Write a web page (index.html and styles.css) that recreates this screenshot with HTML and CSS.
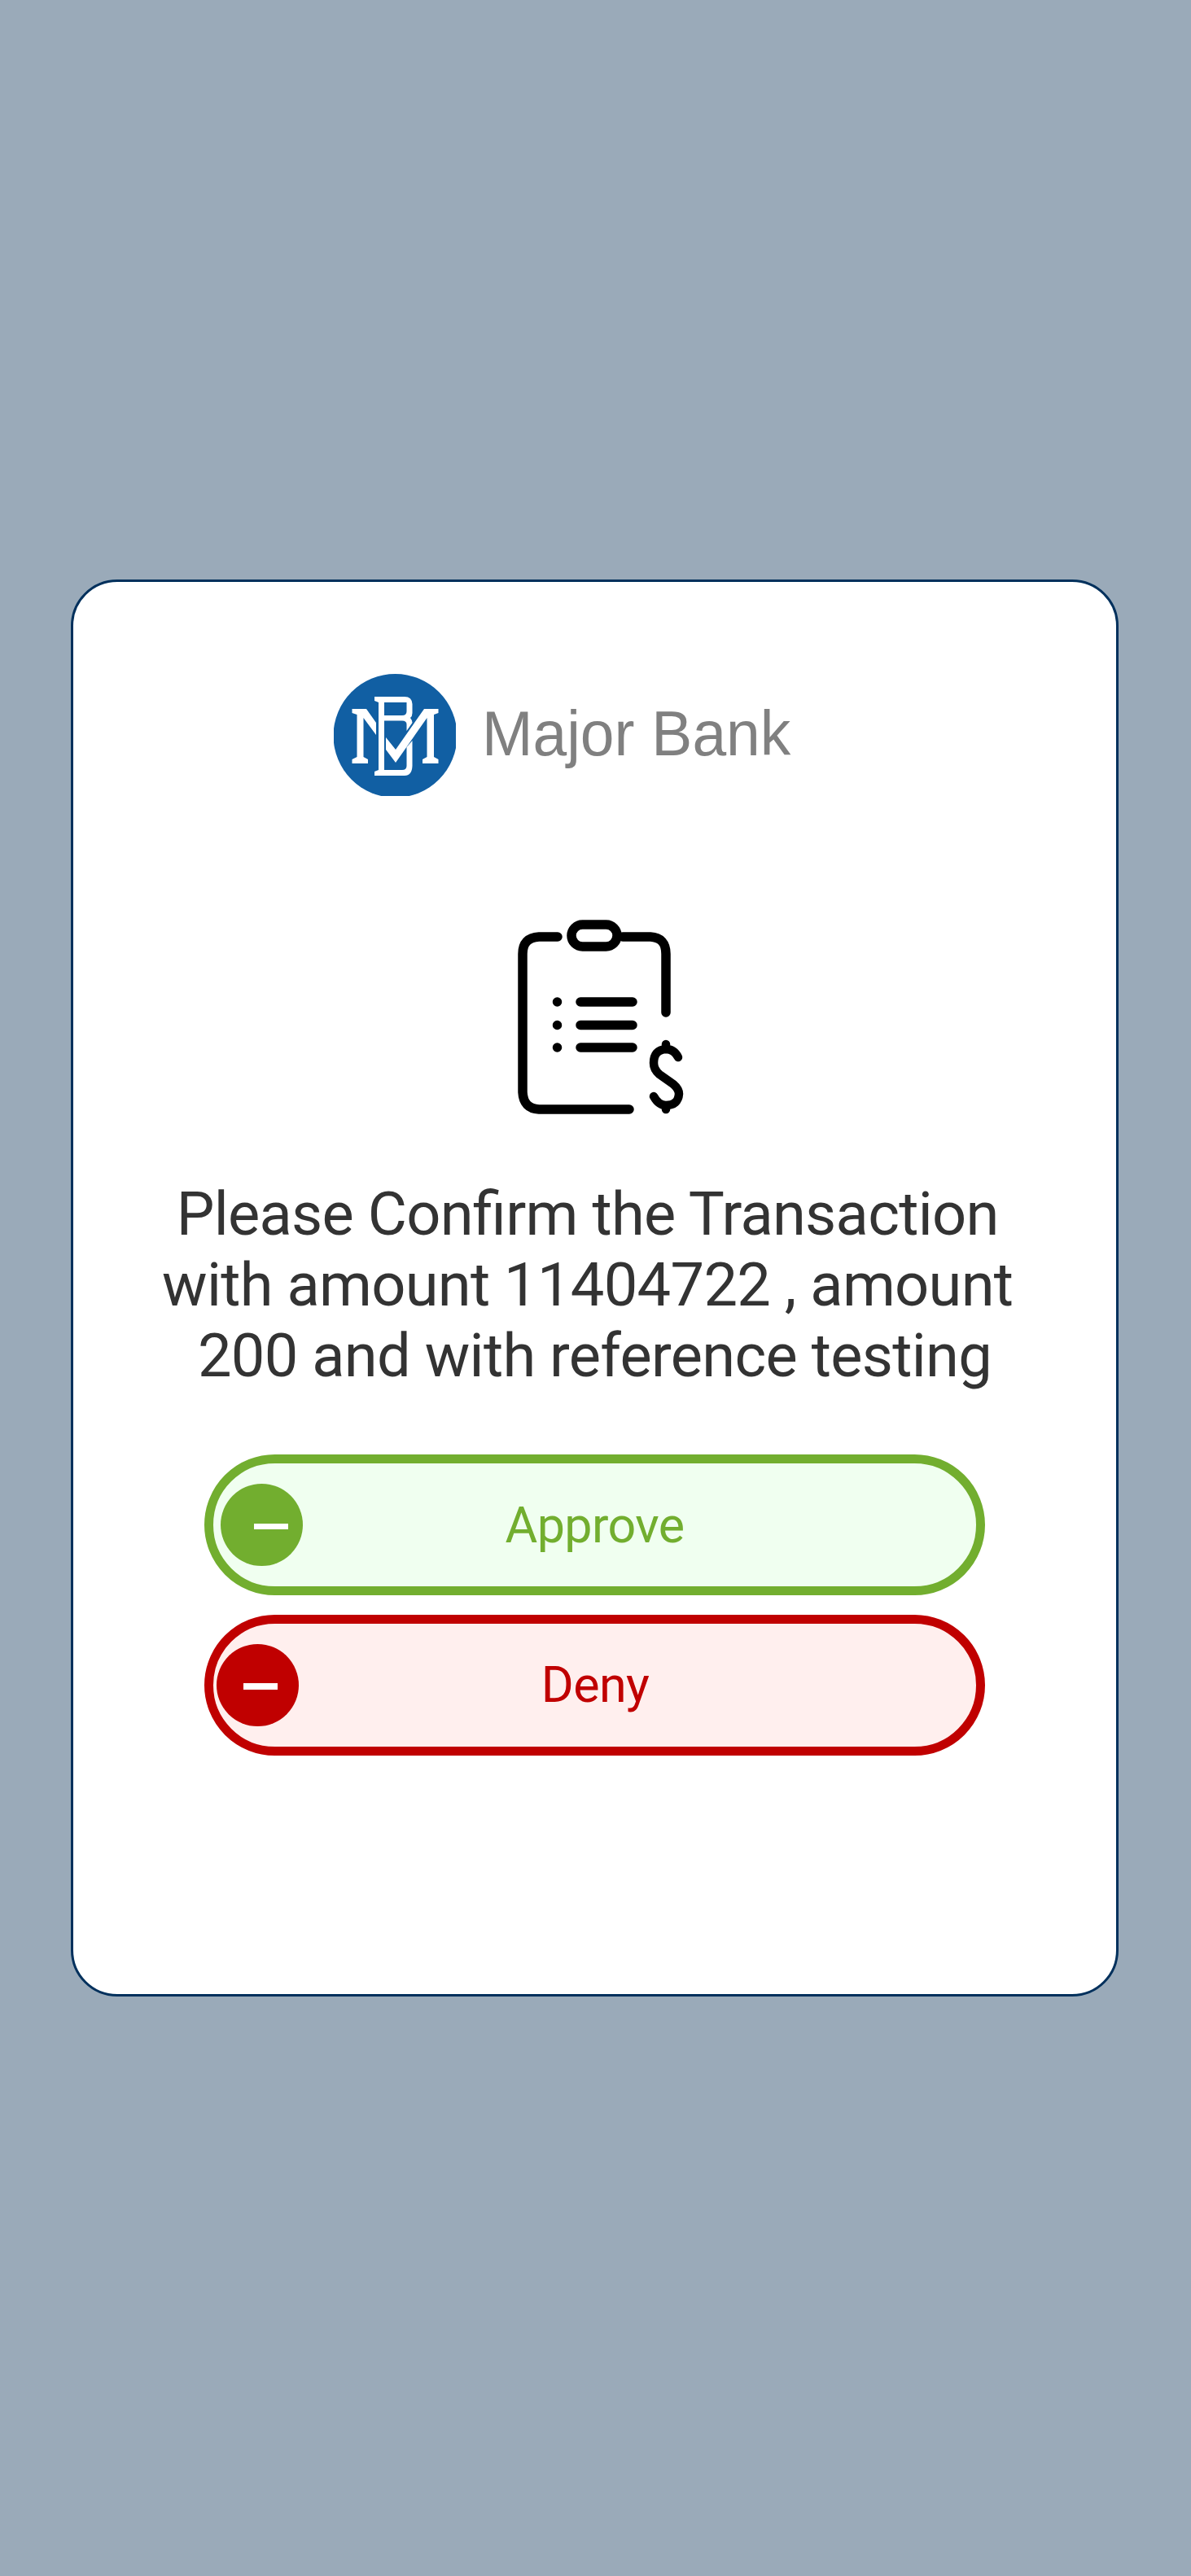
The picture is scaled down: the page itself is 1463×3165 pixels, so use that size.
FILE: index.html
```html
<!DOCTYPE html>
<html lang="en">
<head>
<meta charset="utf-8">
<title>Major Bank – Confirm transaction</title>
<link rel="stylesheet" href="styles.css">
</head>
<body>
<main class="card">
  <header class="brand">
    <svg class="brand-mark" viewBox="0 0 150 150" aria-hidden="true">
      <circle cx="75.5" cy="76" r="76" fill="#115fa3"/>
      <g fill="#fff">
        <path d="M22.500 43H40L52 60V75L36.500 54V102L42 105V110H22.500V105L28.500 102V50L22.500 48Z"/>
        <path fill-rule="evenodd" d="M50 28H87Q96 28 96.500 37V48Q96.500 52 94 54Q96.500 57 96.500 60L89.500 70V62Q89.500 57.500 84 57.500H62V118H84Q89.500 118 89.500 113V90L96.500 82V113Q96 125 87 125H50V120L55 118V35L50 33ZM62 35V51H84Q89.500 51 89.500 46V35Z"/>
        <path d="M64 78L76 93L111 43H128.500V48L123 50V102L128.500 105V110H109V105L114.500 102V54L76 109L64 93Z"/>
      </g>
    </svg>
    <span class="brand-name">Major Bank</span>
  </header>
  <svg class="clipboard" viewBox="0 0 212 240" aria-hidden="true">
    <g fill="none" stroke="#000" stroke-width="11.500" stroke-linecap="round" stroke-linejoin="round">
      <path d="M49 21H26Q6 22 6 42V212Q7 232 26 233H137"/>
      <path d="M129 21H163Q182 22 182 42V114"/>
      <rect x="66" y="6" width="56" height="27" rx="13.500"/>
      <path d="M77 101H141M77 129.500H141M77 157H141"/>
      <path d="M48.500 101h.01M48.500 129.500h.01M48.500 157h.01"/>
      <path stroke-width="10.500" d="M182 153V159M182 229V233M197 169Q192 159 182 159Q167 160 167 176Q167 184 174 190L191 202Q198 208 198 214Q197 228 182 228Q173 228 167 217"/>
    </g>
  </svg>
  <p class="message">Please Confirm the Transaction 
with amount 11404722 , amount 
200 and with reference testing</p>
  <div class="actions">
    <button class="action approve" type="button"><span class="knob"><span class="dash"></span></span><span class="label">Approve</span></button>
    <button class="action deny" type="button"><span class="knob"><span class="dash"></span></span><span class="label">Deny</span></button>
  </div>
</main>
</body>
</html>
```

FILE: styles.css
```css
* { box-sizing: border-box; }
body {
  margin: 0;
  min-height: 3165px;
  padding: 712px 89px 0 87px;
  background: #9aaab9;
  font-family: Roboto, sans-serif;
}
.card {
  display: flex;
  flex-direction: column;
  align-items: center;
  height: 1741px;
  padding-top: 113px;
  border: 3px solid #00305c;
  border-radius: 57px;
  background: #fff;
}
.brand {
  display: flex;
  align-items: center;
  align-self: flex-start;
  gap: 32px;
  height: 150px;
  margin-left: 320px;
}
.brand-mark { width: 150px; height: 150px; }
.brand-name {
  font-family: "Liberation Sans", Arial, sans-serif;
  font-size: 75px;
  line-height: 86px;
  color: #808080;
  white-space: nowrap;
  transform: translateY(-1px) scaleY(1.045);
  transform-origin: 0 69px;
}
.clipboard {
  align-self: flex-start;
  width: 212px;
  height: 240px;
  margin: 152px 0 0 546px;
}
.message {
  margin: 78px 0 0;
  font-size: 74px;
  line-height: 87px;
  letter-spacing: -0.7px;
  font-feature-settings: "liga" 1;
  color: #333;
  text-align: center;
  white-space: pre;
}
.actions {
  display: flex;
  flex-direction: column;
  gap: 24px;
  margin-top: 78px;
}
.action {
  display: grid;
  grid-template-columns: 101px 1fr 101px;
  align-items: center;
  width: 959px;
  height: 173px;
  padding: 0 9px;
  border: 11px solid;
  border-radius: 87px;
  font: 61px/72px Roboto, sans-serif;
  letter-spacing: -0.6px;
}
.approve { color: #72ae2f; background: #f0fff0; }
.deny { color: #c00000; background: #ffefee; padding: 0 4px; }
.knob {
  display: flex;
  align-items: center;
  width: 101px;
  height: 101px;
  border-radius: 50%;
  background: currentColor;
}
.dash { width: 42px; height: 7px; margin: 4px 0 0 41px; background: #fff; }
.deny .dash { height: 8px; margin: 3px 0 0 33px; }
.label { text-align: center; }
.deny .label { padding: 0 0 2px 1px; }
```
